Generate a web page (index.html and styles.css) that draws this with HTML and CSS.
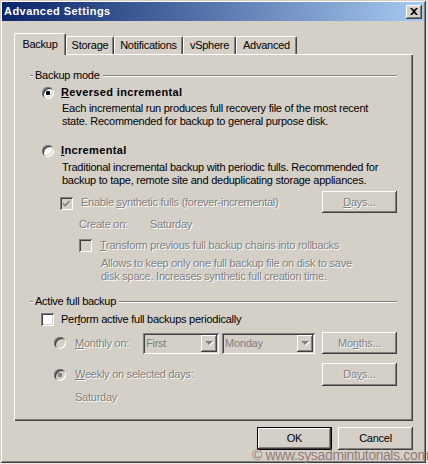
FILE: index.html
```html
<!DOCTYPE html>
<html>
<head>
<meta charset="utf-8">
<title>Advanced Settings</title>
<link rel="stylesheet" href="styles.css">
</head>
<body>
<div class="screen">
  <div class="window">
    <div class="titlebar">
      <span class="title">Advanced Settings</span>
      <span class="close"><svg width="8" height="7" viewBox="0 0 8 7"><path d="M0 0h2l2 2 2-2h2L5 3.5 8 7H6L4 5 2 7H0l3-3.5z" fill="#000"/></svg></span>
    </div>
    <div class="client">
      <div class="tabs">
        <div class="tab active w-backup">Backup</div>
        <div class="tab w-storage">Storage</div>
        <div class="tab w-notif">Notifications</div>
        <div class="tab w-vsphere">vSphere</div>
        <div class="tab w-adv">Advanced</div>
      </div>
      <div class="panel">
        <div class="group-head"><span class="gh-dash"></span><span class="gh-text">Backup mode</span><span class="gh-line"></span></div>

        <div class="row r-reversed indent-radio">
          <span class="radio checked"></span><span class="lbl bold"><u>R</u>eversed incremental</span>
        </div>
        <p class="desc d-reversed">Each incremental run produces full recovery file of the most recent<br>state. Recommended for backup to general purpose disk.</p>

        <div class="row r-incremental indent-radio">
          <span class="radio"></span><span class="lbl bold"><u>I</u>ncremental</span>
        </div>
        <p class="desc d-incremental">Traditional incremental backup with periodic fulls. Recommended for<br>backup to tape, remote site and deduplicating storage appliances.</p>

        <div class="row r-synthetic">
          <span class="check disabled checked"><svg width="9" height="9" viewBox="0 0 9 9"><path d="M1 3.5 3 5.5 7.5 1v2.2L3 7.7 1 5.7z" fill="#808080"/></svg></span>
          <span class="lbl dis">Enable <u>s</u>ynthetic fulls (forever-incremental)</span>
          <span class="btn dis-btn push-right"><u>D</u>ays...</span>
        </div>

        <div class="row r-create">
          <span class="dis create-label">Create on:</span><span class="dis">Saturday</span>
        </div>

        <div class="row r-transform">
          <span class="check disabled"></span><span class="lbl dis"><u>T</u>ransform previous full backup chains into rollbacks</span>
        </div>
        <p class="desc dis d-allows">Allows to keep only one full backup file on disk to save<br>disk space. Increases synthetic full creation time.</p>

        <div class="group-head gh2"><span class="gh-dash"></span><span class="gh-text">Active full backup</span><span class="gh-line"></span></div>

        <div class="row r-perform">
          <span class="check"></span><span class="lbl">Per<u>f</u>orm active full backups periodically</span>
        </div>

        <div class="row r-monthly">
          <span class="radio disabled"></span><span class="lbl dis opt-label"><u>M</u>onthly on:</span>
          <span class="combo c-first"><span class="combo-text">First</span><span class="combo-btn"><span class="arrow"></span></span></span>
          <span class="combo c-day"><span class="combo-text">Monday</span><span class="combo-btn"><span class="arrow"></span></span></span>
          <span class="btn dis-btn push-right">Mo<u>n</u>ths...</span>
        </div>

        <div class="row r-weekly">
          <span class="radio disabled checked"></span><span class="lbl dis opt-label"><u>W</u>eekly on selected days:</span>
          <span class="btn dis-btn push-right">Da<u>y</u>s...</span>
        </div>

        <div class="row r-saturday">
          <span class="dis">Saturday</span>
        </div>
      </div>
      <div class="buttons">
        <span class="btn default">OK</span>
        <span class="btn">Cancel</span>
      </div>
    </div>
  </div>
  <div class="behind"></div>
  <div class="watermark">© www.sysadmintutorials.com</div>
</div>
</body>
</html>
```

FILE: styles.css
```css
* { box-sizing: border-box; }
html, body { margin: 0; padding: 0; }
body {
  width: 428px; height: 464px; overflow: hidden;
  background: #ecebe8;
  font-family: "Liberation Sans", Arial, sans-serif;
  font-size: 11px; line-height: 13px; color: #000;
  letter-spacing: -0.25px;
}
.screen { position: relative; width: 428px; height: 464px; display: flex; overflow: hidden; }
.window {
  width: 426px; height: 463px; background: #d4d0c8; flex: none;
  padding: 2px 2px 0 2px;
  box-shadow: inset 1px 1px 0 #d4d0c8, inset -1px -1px 0 #404040, inset 2px 2px 0 #fff, inset -2px -2px 0 #808080;
  display: flex; flex-direction: column;
}
.behind { flex: 1; background: #e6e4df; }

.titlebar {
  height: 19px; display: flex; align-items: center;
  background: linear-gradient(to right, #0a246a, #a6caf0);
  padding: 0 2px 0 2px;
}
.title { color: #fff; font-weight: bold; font-size: 11px; flex: 1; letter-spacing: 0.45px; }
.close {
  width: 16px; height: 14px; background: #d4d0c8;
  display: flex; align-items: center; justify-content: center;
  box-shadow: inset -1px -1px 0 #404040, inset 1px 1px 0 #fff, inset -2px -2px 0 #808080;
  padding-bottom: 1px;
}
.close svg { display: block; }

.client { padding: 12px 0 0 12px; display: flex; flex-direction: column; }

.tabs { height: 21px; display: flex; align-items: flex-end; position: relative; z-index: 2; }
.tab {
  height: 18px; text-align: center; padding-top: 2px;
  border-top: 1px solid #fff; border-left: 1px solid #fff; border-right: 1px solid #404040;
  box-shadow: inset -1px 0 0 #808080;
  border-radius: 2px 2px 0 0;
  background: #d4d0c8;
}
.tab.active { height: 22px; margin-bottom: -1px; padding-top: 4px; }
.w-backup { width: 52px; }
.w-storage { width: 48px; }
.w-notif { width: 69px; }
.w-vsphere { width: 53px; }
.w-adv { width: 61px; }

.panel {
  width: 399px; height: 367px;
  box-shadow: inset 1px 1px 0 #fff, inset -1px -1px 0 #404040, inset -2px -2px 0 #808080;
  padding: 15px 16px 0 16px;
  display: flex; flex-direction: column;
}

.group-head { height: 13px; display: flex; align-items: center; }
.gh-dash { width: 3px; height: 2px; border-top: 1px solid #808080; border-bottom: 1px solid #fff; margin-right: 2px; }
.gh-text { padding-right: 3px; }
.gh-line { flex: 1; height: 2px; border-top: 1px solid #808080; border-bottom: 1px solid #fff; }
.gh2 { margin-top: 12px; }

.row { display: flex; align-items: center; height: 13px; }
.lbl { white-space: nowrap; }
.bold { font-weight: bold; letter-spacing: 0.35px; }
.dis { color: #808080; text-shadow: 1px 1px 0 #fff; }
.push-right { margin-left: auto; }

.desc { margin: 0; white-space: nowrap; }

.indent-radio { padding-left: 12px; }
.indent-radio .radio { margin-right: 7px; }

.r-reversed { margin-top: 4px; }
.d-reversed { margin-top: 3px; padding-left: 32px; }
.r-incremental { margin-top: 16px; }
.d-incremental { margin-top: 4px; padding-left: 32px; }

.r-synthetic { margin-top: 4px; height: 22px; padding-left: 30px; }
.r-synthetic .check { margin-right: 8px; margin-top: 2px; }
.r-create { margin-top: 5px; padding-left: 49px; }
.create-label { width: 71px; }
.r-transform { margin-top: 8px; padding-left: 49px; }
.r-transform .check { margin-right: 8px; }
.d-allows { margin-top: 5px; padding-left: 71px; }

.r-perform { margin-top: 5px; padding-left: 11px; }
.r-perform .check { margin-right: 7px; }
.r-monthly { margin-top: 6px; height: 22px; padding-left: 24px; }
.r-monthly .radio, .r-weekly .radio { margin-right: 9px; }
.opt-label { width: 68px; }
.r-weekly { margin-top: 9px; height: 23px; padding-left: 24px; }
.r-weekly .opt-label { width: auto; }
.r-saturday { margin-top: 5px; padding-left: 45px; }

/* radio */
.radio {
  width: 12px; height: 12px; border-radius: 50%; background: #fff; flex: none;
  box-shadow: inset 1px 1px 0 #808080, inset -1px -1px 0 #fff, inset 2px 2px 0 #404040, inset -2px -2px 0 #d4d0c8;
  display: flex; align-items: center; justify-content: center;
}
.radio.disabled { background: #d4d0c8; }
.radio.checked::after { content: ""; width: 4px; height: 4px; border-radius: 1px; background: #000; }
.radio.disabled.checked::after { background: #808080; }

/* checkbox */
.check {
  width: 13px; height: 13px; background: #fff; flex: none;
  box-shadow: inset 1px 1px 0 #808080, inset -1px -1px 0 #fff, inset 2px 2px 0 #404040, inset -2px -2px 0 #d4d0c8;
  display: flex; align-items: center; justify-content: center;
}
.check.disabled { background: #d4d0c8; }
.check svg { display: block; }

/* buttons */
.btn {
  width: 75px; height: 22px; background: #d4d0c8; flex: none;
  display: flex; align-items: center; justify-content: center;
  box-shadow: inset -1px -1px 0 #404040, inset 1px 1px 0 #fff, inset -2px -2px 0 #808080;
}
.r-weekly .btn { height: 23px; }
.dis-btn { color: #808080; text-shadow: 1px 1px 0 #fff; }
.btn.default {
  border: 1px solid #000;
  box-shadow: inset -1px -1px 0 #404040, inset 1px 1px 0 #fff, inset -2px -2px 0 #808080;
}
.buttons { display: flex; justify-content: flex-end; gap: 6px; margin-top: 6px; width: 400px; padding-right: 1px; }
.buttons .btn { height: 23px; }

/* combos */
.combo {
  height: 21px; background: #d4d0c8; flex: none;
  box-shadow: inset 1px 1px 0 #808080, inset -1px -1px 0 #fff, inset 2px 2px 0 #404040, inset -2px -2px 0 #d4d0c8;
  display: flex; align-items: center; padding: 2px 2px 2px 3px;
}
.c-first { width: 76px; }
.c-day { width: 93px; margin-left: 3px; }
.combo-text { flex: 1; color: #808080; }
.combo-btn {
  width: 16px; height: 17px; background: #d4d0c8;
  box-shadow: inset -1px -1px 0 #404040, inset 1px 1px 0 #fff, inset -2px -2px 0 #808080;
  display: flex; align-items: center; justify-content: center;
}
.arrow {
  width: 0; height: 0;
  border-left: 4px solid transparent; border-right: 4px solid transparent; border-top: 4px solid #808080;
  filter: drop-shadow(1px 1px 0 #fff);
}

.watermark {
  position: absolute; left: 252px; bottom: 1px;
  font-family: "Liberation Sans", Arial, sans-serif;
  font-size: 14px; line-height: 16px; letter-spacing: -0.35px; color: #977b7a; white-space: nowrap;
}
```
